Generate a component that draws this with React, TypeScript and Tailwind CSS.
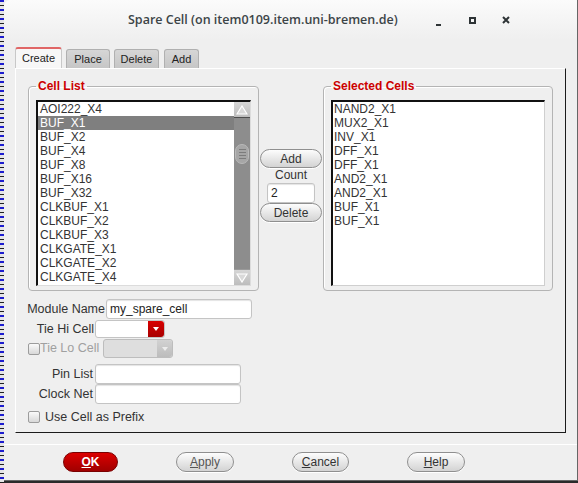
const tabs = [
	{ label: "Create", className: "w-[47px]", active: true },
	{ label: "Place", className: "ml-[4px] w-[44px]" },
	{ label: "Delete", className: "ml-[4px] w-[45px]" },
	{ label: "Add", className: "ml-[5px] w-[35px]" },
];

const cellList = [
	"AOI222_X4",
	"BUF_X1",
	"BUF_X2",
	"BUF_X4",
	"BUF_X8",
	"BUF_X16",
	"BUF_X32",
	"CLKBUF_X1",
	"CLKBUF_X2",
	"CLKBUF_X3",
	"CLKGATE_X1",
	"CLKGATE_X2",
	"CLKGATE_X4",
];

const selectedCells = [
	"NAND2_X1",
	"MUX2_X1",
	"INV_X1",
	"DFF_X1",
	"DFF_X1",
	"AND2_X1",
	"AND2_X1",
	"BUF_X1",
	"BUF_X1",
];

function TitleBar() {
	return (
		<div className="flex h-[40px] items-center rounded-tl-[6px] bg-gradient-to-b from-[#fbfbfb] to-[#efefef]">
			<p className="ml-[124px] font-['Open_Sans',sans-serif] text-[12.5px] font-semibold text-[#3c4447]">
				Spare Cell (on item0109.item.uni-bremen.de)
			</p>

			<div className="mr-[54px] ml-auto flex">
				<div className="flex h-[14px] w-[34px] items-end justify-center">
					<span className="mb-[1px] h-[2px] w-[5px] bg-[#2e3436]" />
				</div>
				<div className="flex h-[14px] w-[34px] items-center justify-center">
					<span className="size-[7px] border-2 border-[#2e3436]" />
				</div>
				<div className="flex h-[14px] w-[34px] items-center justify-center">
					<svg width="8" height="8" viewBox="0 0 8 8">
						<path d="M1 1L7 7M7 1L1 7" stroke="#2e3436" strokeWidth="2" />
					</svg>
				</div>
			</div>
		</div>
	);
}

function PillButton(props: { children: React.ReactNode; className?: string }) {
	const { children, className = "" } = props;

	return (
		<button
			type="button"
			className={`flex items-center justify-center rounded-full border border-[#8f8f8f] bg-gradient-to-b
				from-[#fdfdfd] to-[#d3d3d3] text-[12px] leading-none text-[#333] shadow-[0_1px_0_#fff] ${className}`}
		>
			{children}
		</button>
	);
}

function Checkbox() {
	return (
		<span
			className="block size-[12px] rounded-[2px] border border-[#9c9c9c] bg-gradient-to-b from-[#fafafa]
				to-[#d8d8d8]"
		/>
	);
}

function TextInput(props: { value?: string; className?: string }) {
	const { value, className = "" } = props;

	return (
		<div
			className={`flex items-center rounded-[3px] border border-[#c4c4c4] bg-white pl-[3px] text-[12px]
				text-[#222] shadow-[inset_0_1px_1px_#e4e4e4] ${className}`}
		>
			{value}
		</div>
	);
}

function ArrowButton(props: { down?: boolean }) {
	const { down } = props;

	return (
		<div
			className={`flex h-[16px] items-center justify-center bg-gradient-to-b from-[#d6d6d6] to-[#bdbdbd]
				${down ? "border-t border-[#9a9a9a]" : "border-b border-[#4d4d4d]"}`}
		>
			<svg width="12" height="10" viewBox="0 0 12 10">
				<polygon
					points={down ? "1,1 11,1 6,9" : "6,1 11,9 1,9"}
					fill="#d9d9d9"
					stroke="#ffffff"
					strokeWidth="1.2"
				/>
			</svg>
		</div>
	);
}

function Scrollbar() {
	return (
		<div className="flex w-[16px] flex-col bg-[#8d8d8d]">
			<ArrowButton />
			<div className="h-[26px]" />
			<div
				className="mx-[1px] flex h-[20px] flex-col items-center justify-center gap-[2px] rounded-full border
					border-[#b9b9b9] bg-[#a6a6a6]"
			>
				<span className="h-px w-[7px] bg-[#7c7c7c]" />
				<span className="h-px w-[7px] bg-[#7c7c7c]" />
				<span className="h-px w-[7px] bg-[#7c7c7c]" />
				<span className="h-px w-[7px] bg-[#7c7c7c]" />
			</div>
			<div className="flex-1" />
			<ArrowButton down />
		</div>
	);
}

function GroupBox(props: { title: string; className?: string; children: React.ReactNode }) {
	const { title, className = "", children } = props;

	return (
		<fieldset
			className={`rounded-[4px] border border-[#b4b4b4] px-[7px] pb-[4px] shadow-[inset_1px_1px_0_#fff]
				${className}`}
		>
			<legend className="px-[2px] text-[12px] leading-[14px] font-bold text-[#cc0000]">{title}</legend>
			{children}
		</fieldset>
	);
}

function CellRow(props: { label: string; selected?: boolean; className?: string }) {
	const { label, selected, className = "" } = props;

	return (
		<div
			className={`h-[14px] text-[12px] leading-[14px] whitespace-nowrap
				${selected ? "bg-[#7f7f7f] text-white" : "text-[#333]"} ${className}`}
		>
			{label}
		</div>
	);
}

function Panel() {
	return (
		<div
			className="mx-[11px] flex h-[365px] flex-col border-t border-r border-b border-l border-t-white
				border-r-[#1b1b1b] border-b-[#1b1b1b] border-l-white px-[12px] pt-[10px]"
		>
			<div className="flex">
				<GroupBox title="Cell List" className="w-[231px]">
					<div
						className="mt-[7px] flex h-[186px] w-[215px] border-t-2 border-r border-b border-l-2
							border-t-[#111] border-r-[#dcdcdc] border-b-[#dcdcdc] border-l-[#111] bg-white"
					>
						<div className="flex-1">
							{cellList.map((cell, index) => (
								<CellRow key={cell} label={cell} selected={index === 1} className="pl-[2px]" />
							))}
						</div>
						<Scrollbar />
					</div>
				</GroupBox>

				<div className="flex w-[64px] flex-col items-center">
					<PillButton className="mt-[70px] h-[19px] w-[62px]">Add</PillButton>
					<p className="h-[15px] text-[12px] leading-[15px] text-[#333]">Count</p>
					<TextInput value="2" className="h-[20px] w-[48px] rounded-[2px] pl-[2px]" />
					<PillButton className="h-[19px] w-[62px]">Delete</PillButton>
				</div>

				<GroupBox title="Selected Cells" className="w-[230px]">
					<div
						className="mt-[7px] h-[186px] w-[214px] border-t-2 border-r border-b border-l-2
							border-t-[#111] border-r-[#cfcfcf] border-b-[#cfcfcf] border-l-[#111] bg-white"
					>
						{selectedCells.map((cell, index) => (
							<CellRow key={`${cell}-${index}`} label={cell} className="pl-[1px]" />
						))}
					</div>
				</GroupBox>
			</div>

			<div className="mt-[8px] flex h-[20px] items-center">
				<p className="-ml-[1px] w-[79px] pr-[1px] text-right text-[12.5px] text-[#333]">Module Name</p>
				<TextInput value="my_spare_cell" className="h-[20px] w-[146px]" />
			</div>

			<div className="mt-[1px] flex h-[18px] items-center">
				<p className="w-[67px] pr-[1px] text-right text-[12.5px] text-[#333]">Tie Hi Cell</p>
				<div className="flex h-[18px] w-[70px] rounded-[3px] border border-[#c4c4c4] bg-white">
					<div className="flex-1" />
					<div
						className="flex w-[16px] items-center justify-center rounded-r-[3px] bg-gradient-to-b
							from-[#d80000] to-[#a80000]"
					>
						<span className="border-x-[3px] border-t-[4px] border-x-transparent border-t-white" />
					</div>
				</div>
			</div>

			<div className="mt-[1px] flex h-[19px] items-center">
				<Checkbox />
				<p className="w-[63px] text-[12.5px] text-[#a0a0a0]">Tie Lo Cell</p>
				<div className="flex h-[19px] w-[70px] rounded-[3px] border border-[#bdbdbd] bg-[#dedede]">
					<div className="flex-1" />
					<div
						className="flex w-[15px] items-center justify-center rounded-r-[3px] bg-gradient-to-b
							from-[#d2d2d2] to-[#bcbcbc]"
					>
						<span className="border-x-[3px] border-t-[4px] border-x-transparent border-t-[#ececec]" />
					</div>
				</div>
			</div>

			<div className="mt-[6px] flex h-[20px] items-center">
				<p className="w-[67px] pr-[2px] text-right text-[12.5px] text-[#333]">Pin List</p>
				<TextInput className="h-[20px] w-[146px]" />
			</div>

			<div className="flex h-[20px] items-center">
				<p className="w-[67px] pr-[2px] text-right text-[12.5px] text-[#333]">Clock Net</p>
				<TextInput className="h-[20px] w-[146px]" />
			</div>

			<div className="mt-[4px] flex items-center">
				<Checkbox />
				<p className="ml-[5px] text-[12.5px] text-[#333]">Use Cell as Prefix</p>
			</div>
		</div>
	);
}

export default function App() {
	return (
		<div className="flex h-[483px] w-[578px] bg-[#2a2a2a] font-['Liberation_Sans',Arial,sans-serif]">
			<div
				className="h-full w-[4px] bg-[repeating-linear-gradient(180deg,#1c1ccf_0px,#1c1ccf_2px,#e6e6e6_2px,#e6e6e6_5px,#202020_5px,#202020_6px,#e6e6e6_6px,#e6e6e6_9px)]"
			/>

			<div className="flex h-[481px] w-[574px] flex-col border-r border-b border-[#666] bg-[#efefef]">
				<TitleBar />

				<div className="mt-[8px] flex h-[20px] items-end pl-[11px]">
					{tabs.map((tab) => (
						<div
							key={tab.label}
							className={`flex items-center justify-center rounded-t-[3px] border-x border-t text-[11px]
								text-[#222] ${tab.className} ${
									tab.active
										? "h-[21px] border-x-[#c8c8c8] border-t-2 border-t-[#e06666] bg-[#f7f7f7]"
										: "h-[19px] border-[#b0b0b0] bg-gradient-to-b from-[#d6d6d6] to-[#c6c6c6]"
								}`}
						>
							{tab.label}
						</div>
					))}
				</div>

				<Panel />

				<div className="mt-[11px] border-t border-white" />

				<div className="mt-[7px] flex gap-[58px] pl-[59px]">
					<button
						type="button"
						className="flex h-[20px] w-[55px] items-center justify-center rounded-full border border-[#7a0000]
							bg-gradient-to-b from-[#dc0000] to-[#a00000] text-[12px] font-bold text-white"
					>
						<span className="underline">O</span>K
					</button>
					<PillButton className="h-[20px] w-[58px] text-[#555]">
						<span className="underline">A</span>pply
					</PillButton>
					<PillButton className="h-[20px] w-[57px]">
						<span className="underline">C</span>ancel
					</PillButton>
					<PillButton className="h-[20px] w-[58px]">
						<span className="underline">H</span>elp
					</PillButton>
				</div>
			</div>
		</div>
	);
}
